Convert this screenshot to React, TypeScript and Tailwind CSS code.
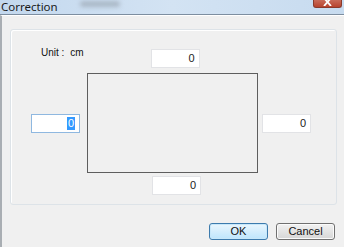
import React from "react";

function Field({ value, focused }: { value: string; focused?: boolean }) {
  return (
    <div
      className={
        "w-[49px] h-[19px] bg-white flex items-center justify-end pr-[4px] text-[11px] leading-none text-[#222] " +
        (focused ? "border border-[#8fb8e0]" : "border border-[#e2e3e6]")
      }
    >
      {focused ? (
        <span className="bg-[#3399ff] text-white px-[1px] h-[13px] flex items-center">{value}</span>
      ) : (
        <span>{value}</span>
      )}
    </div>
  );
}

export default function App() {
  return (
    <div
      className="w-[344px] h-[247px] flex flex-col bg-[#f0f0f0] overflow-hidden"
      style={{ fontFamily: '"Liberation Sans", Arial, sans-serif' }}
    >
      {/* Title bar */}
      <div className="relative h-[15px] shrink-0 bg-gradient-to-r from-[#c3d8ee] via-[#d3e3f3] to-[#c7dbef] border-b border-[#7d8ea0] flex items-start pt-[1px]">
        <span
          className="pl-[1px] text-[11.5px] text-[#1a1a1a] leading-[12px]"
          style={{ fontFamily: '"Noto Sans", "Open Sans", sans-serif' }}
        >
          Correction
        </span>
        <div className="ml-[22px] w-[40px] h-[6px] rounded-full bg-[#aab8c6] blur-[2px]" />
        <div className="absolute right-[2px] top-0 w-[29px] h-[8px] rounded-b-[3px] bg-gradient-to-b from-[#c86a58] to-[#b8432d] border border-t-0 border-[#8a3a2c] flex justify-center overflow-hidden">
          <svg width="9" height="8" viewBox="0 0 9 8" className="-mt-[2px]">
            <path d="M1 0 L8 8 M8 0 L1 8" stroke="#ffffff" strokeWidth="1.8" />
          </svg>
        </div>
      </div>
      {/* Body */}
      <div className="flex-1 flex flex-col border-l-2 border-[#a9aeb3] border-t border-t-white">
        {/* Group box */}
        <div className="ml-[8px] mt-[13px] w-[327px] h-[176px] rounded-[3px] border border-[#dde3e8] shadow-[inset_1px_1px_0_#ffffff] flex flex-col">
          <div className="flex items-start mt-[19px] h-[19px]">
            <span className="ml-[30px] -mt-[3px] text-[10px] text-[#111] leading-[14px]">Unit :</span>
            <span className="ml-[6px] -mt-[3px] text-[10px] text-[#111] leading-[14px]">cm</span>
            <div className="ml-[67px]">
              <Field value="0" />
            </div>
          </div>
          <div className="flex items-center mt-[5px]">
            <div className="ml-[20px]">
              <Field value="0" focused />
            </div>
            <div className="ml-[7px] w-[171px] h-[100px] border border-[#5e5e5e]" />
            <div className="ml-[4px]">
              <Field value="0" />
            </div>
          </div>
          <div className="mt-[3px] ml-[141px]">
            <Field value="0" />
          </div>
        </div>
        {/* Buttons */}
        <div className="flex justify-end gap-[8px] mt-[18px] mr-[9px]">
          <button className="w-[59px] h-[17px] rounded-[3px] border border-[#3d7bad] bg-gradient-to-b from-[#eaf6fd] to-[#bee6fd] text-[11px] text-[#111] leading-none shadow-[inset_0_0_0_1px_#c8e8fa]">
            OK
          </button>
          <button className="w-[59px] h-[17px] rounded-[3px] border border-[#707070] bg-gradient-to-b from-[#f2f2f2] to-[#d6d6d6] text-[11px] text-[#111] leading-none shadow-[inset_0_0_0_1px_#fbfbfb]">
            Cancel
          </button>
        </div>
      </div>
    </div>
  );
}
